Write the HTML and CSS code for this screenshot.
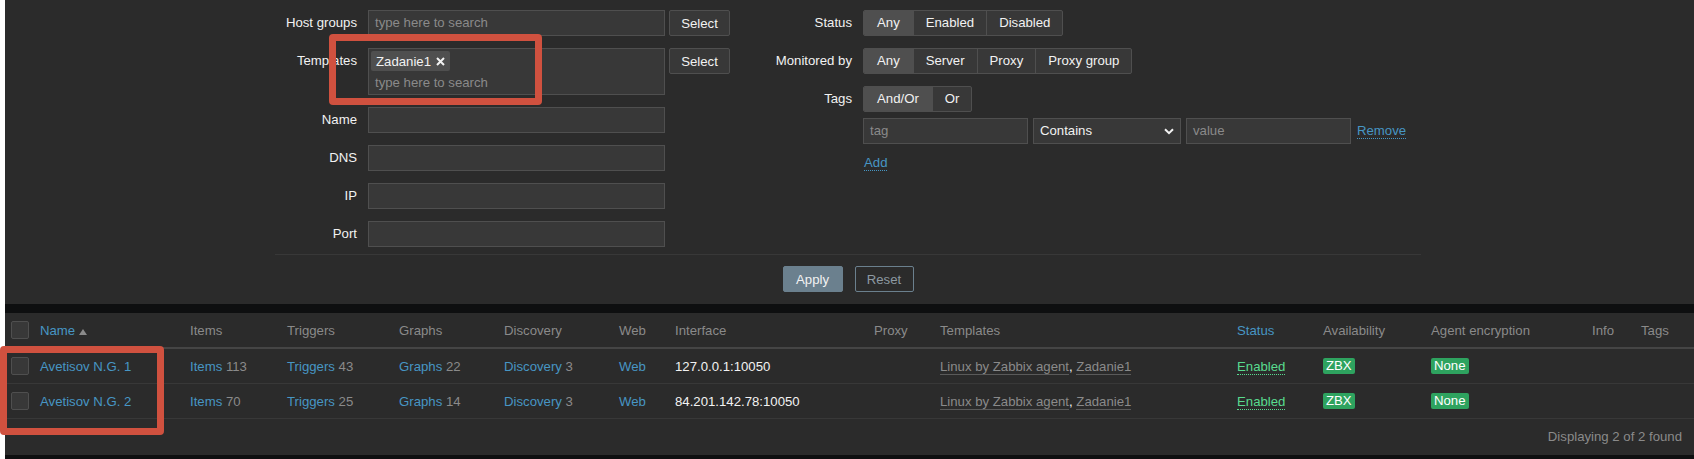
FILE: index.html
```html
<!DOCTYPE html>
<html>
<head>
<meta charset="utf-8">
<link rel="stylesheet" href="styles.css">
</head>
<body>
<div class="page">
  <section class="filter">
    <div class="filter-inner">
      <div class="filter-cols">
        <div class="fcol fcol-left">
          <div class="frow">
            <label class="flabel">Host groups</label>
            <div class="ms"><span class="ph">type here to search</span></div>
            <button class="btn-sel">Select</button>
          </div>
          <div class="frow">
            <label class="flabel">Templates</label>
            <div class="ms ms-tall">
              <span class="chip">Zadanie1<svg class="chip-x" width="9" height="9" viewBox="0 0 9 9"><path d="M1 1L8 8M8 1L1 8" stroke="#f2f2f2" stroke-width="2"/></svg></span>
              <span class="ph ph-line">type here to search</span>
            </div>
            <button class="btn-sel">Select</button>
          </div>
          <div class="frow"><label class="flabel">Name</label><div class="inp"></div></div>
          <div class="frow"><label class="flabel">DNS</label><div class="inp"></div></div>
          <div class="frow"><label class="flabel">IP</label><div class="inp"></div></div>
          <div class="frow"><label class="flabel">Port</label><div class="inp"></div></div>
        </div>
        <div class="fcol fcol-right">
          <div class="frow">
            <label class="flabel flabel-r">Status</label>
            <div class="seg"><span class="on">Any</span><span>Enabled</span><span>Disabled</span></div>
          </div>
          <div class="frow">
            <label class="flabel flabel-r">Monitored by</label>
            <div class="seg"><span class="on">Any</span><span>Server</span><span>Proxy</span><span>Proxy group</span></div>
          </div>
          <div class="frow">
            <label class="flabel flabel-r">Tags</label>
            <div class="seg"><span class="on">And/Or</span><span>Or</span></div>
          </div>
          <div class="frow tagrow">
            <div class="inp inp-tag"><span class="ph">tag</span></div>
            <div class="inp sel"><span>Contains</span><svg width="10" height="7" viewBox="0 0 10 7"><path d="M1 1.2L5 5.2L9 1.2" fill="none" stroke="#f2f2f2" stroke-width="2"/></svg></div>
            <div class="inp inp-tag"><span class="ph">value</span></div>
            <a class="dlink">Remove</a>
          </div>
          <div class="addrow"><a class="dlink">Add</a></div>
        </div>
      </div>
      <div class="fsep"></div>
      <div class="fbtns">
        <button class="btn-apply">Apply</button>
        <button class="btn-reset">Reset</button>
      </div>
    </div>
  </section>

  <section class="tbl">
    <div class="trow thead">
      <div><span class="cb"></span></div>
      <div class="lnk">Name <svg width="8" height="6" viewBox="0 0 8 6"><path d="M0 6L4 0L8 6Z" fill="#8a8a8a"/></svg></div>
      <div>Items</div>
      <div>Triggers</div>
      <div>Graphs</div>
      <div>Discovery</div>
      <div>Web</div>
      <div>Interface</div>
      <div>Proxy</div>
      <div>Templates</div>
      <div class="lnk">Status</div>
      <div>Availability</div>
      <div>Agent encryption</div>
      <div>Info</div>
      <div>Tags</div>
    </div>
    <div class="trow tr">
      <div><span class="cb"></span></div>
      <div class="lnk">Avetisov N.G. 1</div>
      <div><span class="lnk">Items</span> <span class="cnt">113</span></div>
      <div><span class="lnk">Triggers</span> <span class="cnt">43</span></div>
      <div><span class="lnk">Graphs</span> <span class="cnt">22</span></div>
      <div><span class="lnk">Discovery</span> <span class="cnt">3</span></div>
      <div class="lnk">Web</div>
      <div class="iface">127.0.0.1:10050</div>
      <div></div>
      <div class="tpls"><span class="tpl">Linux by Zabbix agent</span>, <span class="tpl">Zadanie1</span></div>
      <div><span class="green">Enabled</span></div>
      <div><span class="badge">ZBX</span></div>
      <div><span class="badge">None</span></div>
      <div></div>
      <div></div>
    </div>
    <div class="trow tr">
      <div><span class="cb"></span></div>
      <div class="lnk">Avetisov N.G. 2</div>
      <div><span class="lnk">Items</span> <span class="cnt">70</span></div>
      <div><span class="lnk">Triggers</span> <span class="cnt">25</span></div>
      <div><span class="lnk">Graphs</span> <span class="cnt">14</span></div>
      <div><span class="lnk">Discovery</span> <span class="cnt">3</span></div>
      <div class="lnk">Web</div>
      <div class="iface">84.201.142.78:10050</div>
      <div></div>
      <div class="tpls"><span class="tpl">Linux by Zabbix agent</span>, <span class="tpl">Zadanie1</span></div>
      <div><span class="green">Enabled</span></div>
      <div><span class="badge">ZBX</span></div>
      <div><span class="badge">None</span></div>
      <div></div>
      <div></div>
    </div>
    <div class="tfoot">Displaying 2 of 2 found</div>
  </section>

  <div class="mark mark-1"></div>
  <div class="mark mark-2"></div>
</div>
</body>
</html>
```

FILE: styles.css
```css
* { box-sizing: border-box; }
html, body { margin: 0; padding: 0; }
body {
  background: #ffffff;
  font-family: "Liberation Sans", Arial, sans-serif;
  font-size: 13.2px;
  color: #f2f2f2;
  width: 1694px;
  height: 459px;
  overflow: hidden;
}
.page {
  position: relative;
  margin-left: 5px;
  height: 459px;
  background: #0e0f10;
  display: flex;
  flex-direction: column;
  gap: 9px;
}

/* ---------- filter ---------- */
.filter {
  background: #2b2b2b;
  height: 304px;
  padding-top: 10px;
}
.filter-inner {
  margin-left: 270px;
  width: 1146px;
}
.filter-cols {
  display: flex;
  gap: 12px;
  height: 237px;
}
.fcol { display: flex; flex-direction: column; gap: 12px; }
.fcol-left { width: 455px; }
.frow { display: flex; align-items: flex-start; }
.flabel {
  width: 82px;
  margin-right: 11px;
  text-align: right;
  line-height: 26px;
  white-space: nowrap;
}
.flabel-r { width: 110px; }
.ms, .inp {
  width: 297px;
  height: 26px;
  background: #383838;
  border: 1px solid #4f4f4f;
  padding: 0 6px;
  line-height: 24px;
}
.ms-tall {
  height: 47px;
  padding: 2px 2px 0 2px;
  line-height: normal;
}
.ph { color: #8a8a8a; }
.chip {
  display: inline-flex;
  align-items: center;
  height: 20px;
  background: #4f4f4f;
  padding: 0 5px 0 5px;
  color: #f2f2f2;
  border-radius: 2px;
}
.chip-x { margin-left: 5px; }
.ph-line { display: block; padding-left: 4px; margin-top: 2px; line-height: 20px; }
.btn-sel {
  margin-left: 4px;
  width: 61px;
  height: 26px;
  background: #383838;
  border: 1px solid #4f4f4f;
  border-radius: 2px;
  color: #f2f2f2;
  font: inherit;
  padding: 0;
}
.seg {
  display: flex;
  height: 26px;
  border: 1px solid #4f4f4f;
  border-radius: 2px;
  background: #383838;
  overflow: hidden;
}
.seg span {
  padding: 0 12px;
  line-height: 24px;
  border-left: 1px solid #4f4f4f;
}
.seg span:first-child { border-left: none; }
.seg span.on { background: #4f4f4f; padding: 0 13px; }
.tagrow { margin-top: -6px; padding-left: 121px; gap: 5px; align-items: center; }
.inp-tag { width: 165px; }
.sel {
  width: 148px;
  display: flex;
  align-items: center;
  justify-content: space-between;
  padding: 0 6px 0 6px;
}
.dlink {
  color: #4796c4;
  border-bottom: 1px dotted #4796c4;
  line-height: 14px;
  margin-left: 1px;
}
.addrow { padding-left: 121px; margin-top: -1px; }
.fsep { height: 1px; background: #383838; margin-top: 7px; }
.fbtns {
  display: flex;
  justify-content: center;
  gap: 12px;
  margin-top: 11px;
}
.btn-apply, .btn-reset {
  height: 26px;
  font: inherit;
  border-radius: 2px;
  padding: 0;
}
.btn-apply {
  width: 60px;
  background: #6b808e;
  border: 1px solid #6b808e;
  color: #f2f2f2;
}
.btn-reset {
  width: 59px;
  background: transparent;
  border: 1px solid #6b808e;
  color: #8d99a2;
}

/* ---------- table ---------- */
.tbl {
  background: #2b2b2b;
  height: 142px;
}
.trow {
  display: grid;
  grid-template-columns: 29px 150px 97px 112px 105px 115px 56px 199px 66px 297px 86px 108px 161px 49px 1fr;
  align-items: center;
  padding-left: 6px;
  white-space: nowrap;
}
.thead {
  height: 36px;
  border-bottom: 2px solid #454545;
  color: #8a8a8a;
}
.tr {
  height: 35px;
  border-bottom: 1px solid #383838;
}
.cb {
  display: block;
  width: 18px;
  height: 18px;
  background: #383838;
  border: 1px solid #4f4f4f;
  border-radius: 2px;
}
.lnk { color: #4796c4; }
.cnt { color: #8a8a8a; }
.iface { color: #f2f2f2; }
.tpls { color: #f2f2f2; }
.tpl { color: #8a8a8a; border-bottom: 1px solid #5a5a5a; }
.green { color: #59db8f; border-bottom: 1px dotted #59db8f; }
.badge {
  display: inline-block;
  background: #2ea35f;
  color: #ffffff;
  height: 16px;
  line-height: 16px;
  padding: 0 3px;
  border-radius: 2px;
}
.tfoot {
  height: 36px;
  line-height: 36px;
  text-align: right;
  padding-right: 12px;
  color: #8a8a8a;
}

/* ---------- annotation marks ---------- */
.mark {
  position: absolute;
  border: 7px solid #d0513f;
  border-radius: 4px;
}
.mark-1 { left: 324px; top: 34px; width: 213px; height: 71px; }
.mark-2 { left: -5px; top: 346px; width: 164px; height: 89px; }
```
